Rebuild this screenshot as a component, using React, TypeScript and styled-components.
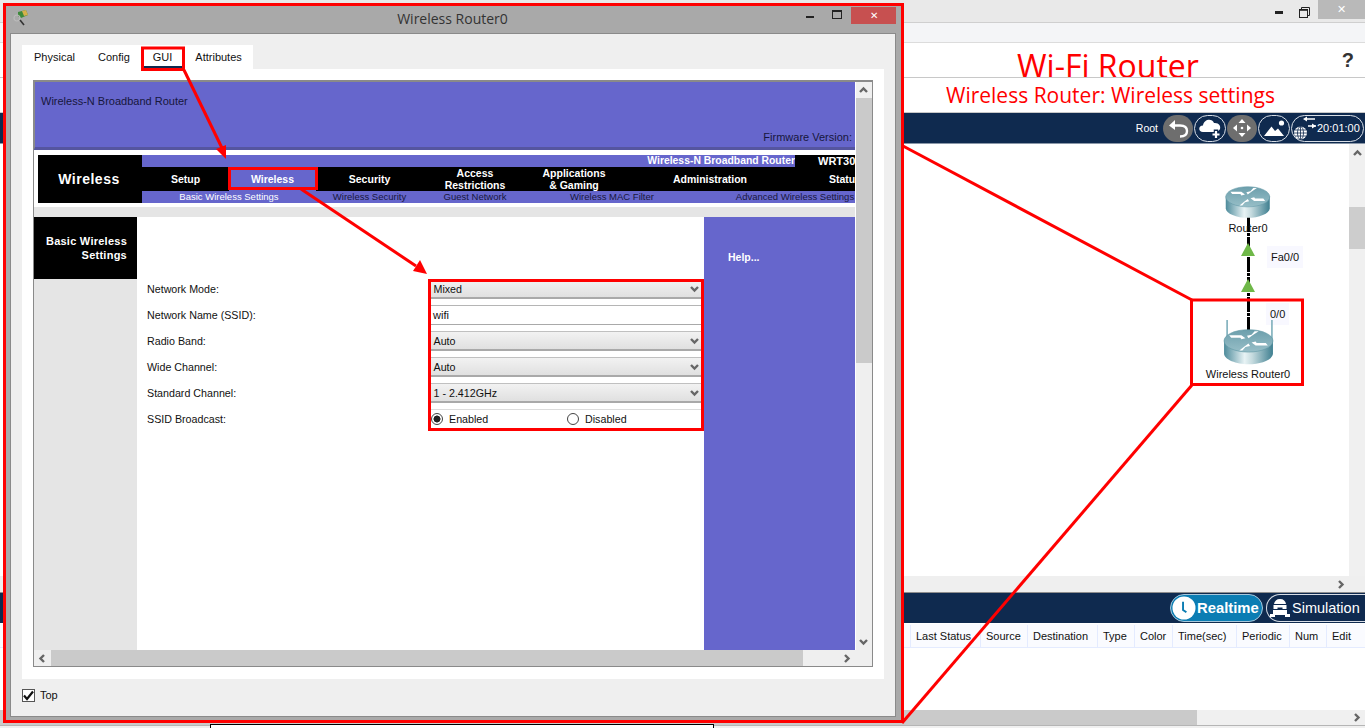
import styled, { createGlobalStyle } from "styled-components";

const GlobalStyle = createGlobalStyle`
  html, body {
    margin: 0;
    padding: 0;
    overflow: hidden;
    background: #f0f0f0;
    font-family: "Liberation Sans", Arial, sans-serif;
  }
`;

const NAVY = "#0f2a4f";
const PURPLE = "#6666cc";
const RED = "#ff0000";

const tableColumns = [
  ["Last Status", 70],
  ["Source", 47],
  ["Destination", 70],
  ["Type", 37],
  ["Color", 38],
  ["Time(sec)", 64],
  ["Periodic", 53],
  ["Num", 37],
  ["Edit", 38],
] as const;

const mainTabs = [
  { label: "Setup", width: 87 },
  { label: "Wireless", width: 87, active: true },
  { label: "Security", width: 107 },
  { label: "Access\nRestrictions", width: 104 },
  { label: "Applications\n& Gaming", width: 94 },
  { label: "Administration", width: 178 },
  { label: "Status", width: 92 },
];

const subTabs = [
  { label: "Basic Wireless Settings", width: 174, active: true },
  { label: "Wireless Security", width: 107 },
  { label: "Guest Network", width: 104 },
  { label: "Wireless MAC Filter", width: 170 },
  { label: "Advanced Wireless Settings", width: 196 },
];

const Chevron = ({ dir, color = "#666" }: { dir: "up" | "down" | "left" | "right"; color?: string }) => {
  const points = {
    up: "2,7 5.5,3.5 9,7",
    down: "2,4 5.5,7.5 9,4",
    left: "7,2 3.5,5.5 7,9",
    right: "4,2 7.5,5.5 4,9",
  }[dir];
  return (
    <svg width="11" height="11" viewBox="0 0 11 11">
      <polyline points={points} fill="none" stroke={color} strokeWidth="2.4" />
    </svg>
  );
};

const RouterIcon = ({ wireless, width }: { wireless?: boolean; width: number }) => (
  <svg width={width} height={(width * 44) / 54} viewBox="0 0 54 44">
    <defs>
      <linearGradient id="routerSide" x1="0" x2="1" y1="0" y2="0">
        <stop offset="0" stopColor="#4d8b9b" />
        <stop offset="0.42" stopColor="#e8f3f5" />
        <stop offset="0.58" stopColor="#c4dade" />
        <stop offset="1" stopColor="#3f7f90" />
      </linearGradient>
      <linearGradient id="routerTop" x1="0" x2="0" y1="0" y2="1">
        <stop offset="0" stopColor="#6c9fac" />
        <stop offset="1" stopColor="#97bec7" />
      </linearGradient>
    </defs>
    {wireless && (
      <g stroke="#7fb0bc" strokeWidth="1.6" fill="none">
        <line x1="6" y1="0" x2="6" y2="20" />
        <line x1="50" y1="0" x2="50" y2="20" />
      </g>
    )}
    <path d="M3 20 V33 C3 39 15 43.5 27 43.5 C39 43.5 51 39 51 33 V20 Z" fill="url(#routerSide)" />
    <ellipse cx="27" cy="20.5" rx="24" ry="11" fill="url(#routerTop)" stroke="#5f97a5" strokeWidth="0.6" />
    <g fill="#fff">
      <path d="M8 15 L20 15 L24 18 L20 19 L19 17.5 L10 17.5 Z" />
      <path d="M46 25 L34 25 L30 22 L34 21 L35 22.5 L44 22.5 Z" />
      <path d="M37 11 L31 15 L27 18 L25.5 15.5 L30 14.5 L33 11 Z" />
      <path d="M18 30 L23 26 L27 23 L28.5 25.5 L24 26.5 L21 30 Z" />
    </g>
  </svg>
);

const App = () => {
  return (
    <>
      <GlobalStyle />
      <Page>
        <TopBar>
          <MinimizeGlyph />
          <RestoreGlyph>
            <svg width="11" height="11" viewBox="0 0 11 11">
              <rect x="0.5" y="2.5" width="8" height="8" fill="none" stroke="#222" />
              <path d="M2.5 2.5 V0.5 H10.5 V8.5 H8.5" fill="none" stroke="#222" />
              <line x1="0" y1="3" x2="9" y2="3" stroke="#222" strokeWidth="1.6" />
            </svg>
          </RestoreGlyph>
          <CloseBox>✕</CloseBox>
        </TopBar>
        <MenuBar />
        <TitleStrip>
          <BigTitle>Wi-Fi Router</BigTitle>
          <HelpMark>?</HelpMark>
        </TitleStrip>
        <SubtitleStrip>
          <SubTitle>Wireless Router: Wireless settings</SubTitle>
        </SubtitleStrip>
        <NavyToolbar>
          <RootLabel>Root</RootLabel>
          <ToolPill $filled $width={30}>
            <svg width="26" height="24" viewBox="0 0 26 24">
              <path d="M10 4 L4 9.5 L10 14 Z" fill="#fff" />
              <path d="M8 9.5 H15 C20 9.5 22 12 22 15 C22 18.5 19.5 20.5 15 20.5" fill="none" stroke="#fff" strokeWidth="2.4" />
            </svg>
          </ToolPill>
          <ToolPill $width={32}>
            <svg width="28" height="24" viewBox="0 0 28 24">
              <path d="M7 16 C2 16 2 9.5 7 9.5 C8 3 16 2 18 7 C23 6.5 25 10 24 13 C23 15 21 16 19 16 Z" fill="#fff" />
              <path d="M20 13.5 V23 M15.5 18.5 H25" stroke={NAVY} strokeWidth="4.5" />
              <path d="M20 15 V22 M16.5 18.5 H23.5" stroke="#fff" strokeWidth="2.2" />
            </svg>
          </ToolPill>
          <ToolPill $filled $width={30}>
            <svg width="24" height="24" viewBox="0 0 24 24" fill="#fff">
              <path d="M12 3 L15.5 7 H8.5 Z" />
              <path d="M12 21 L8.5 17 H15.5 Z" />
              <path d="M3 12 L7 8.5 V15.5 Z" />
              <path d="M21 12 L17 15.5 V8.5 Z" />
              <circle cx="12" cy="12" r="1.3" />
            </svg>
          </ToolPill>
          <ToolPill $width={32}>
            <svg width="28" height="22" viewBox="0 0 28 22" fill="#fff">
              <path d="M4 19 L11.5 9.5 L15 14 L18 11.5 L24 19 Z" />
              <circle cx="21.5" cy="6" r="2.6" />
            </svg>
          </ToolPill>
          <ClockPill>
            <svg width="24" height="26" viewBox="0 0 24 26">
              <circle cx="7.5" cy="18" r="6.5" fill="#fff" />
              <g stroke={NAVY} strokeWidth="0.8" fill="none">
                <ellipse cx="7.5" cy="18" rx="3" ry="6.5" />
                <path d="M1 18 H14 M2 15 H13 M2 21 H13 M7.5 11.5 V24.5" />
              </g>
              <path d="M12 4 H22 M15 11 H23" stroke="#fff" strokeWidth="1.6" />
              <path d="M14 1.5 L10 4 L14 6.5 Z M19 8.5 L23 11 L19 13.5 Z" fill="#fff" />
            </svg>
            <ClockText>20:01:00</ClockText>
          </ClockPill>
        </NavyToolbar>
        <CanvasRow>
          <Canvas>
            <WireLine />
            <LinkArrow $top={99} />
            <LinkArrow $top={135} />
            <RouterSpot $left={1223} $top={34}>
              <RouterIcon width={49.5} />
            </RouterSpot>
            <DeviceName $center={1248} $top={78}>Router0</DeviceName>
            <PortLabel $left={1267} $top={102}>Fa0/0</PortLabel>
            <PortLabel $left={1266} $top={159}>0/0</PortLabel>
            <RouterSpot $left={1221} $top={176}>
              <RouterIcon wireless width={55} />
            </RouterSpot>
            <DeviceName $center={1248} $top={224}>Wireless Router0</DeviceName>
          </Canvas>
          <CanvasScroll>
            <Chevron dir="up" />
            <CanvasThumb />
          </CanvasScroll>
        </CanvasRow>
        <CanvasHScroll>
          <Chevron dir="right" />
        </CanvasHScroll>
        <ModeBar>
          <RealtimePill>
            <svg width="24" height="24" viewBox="0 0 25 25">
              <circle cx="12.5" cy="12.5" r="12" fill="#fff" />
              <path d="M11.5 6 V14.5 L15 17" fill="none" stroke="#0b7db3" strokeWidth="2" />
            </svg>
            Realtime
          </RealtimePill>
          <SimulationPill>
            <svg width="24" height="24" viewBox="0 0 24 24" fill="#fff">
              <path d="M12 3 C15.5 3 17.5 5 18 8 H6 C6.5 5 8.5 3 12 3 Z" />
              <path d="M5.5 9 H18.5 V13 H14.5 V11.5 H9.5 V13 H5.5 Z" />
              <path d="M5 14 H19 V18 H22 V21 H17 V19 H7 V21 H2 V18 H5 Z" />
            </svg>
            Simulation
          </SimulationPill>
        </ModeBar>
        <TableHead>
          {tableColumns.map(([label, width]) => (
            <TableCol key={label} $width={width}>{label}</TableCol>
          ))}
        </TableHead>
        <TableBody />
        <TableScroll>
          <TableThumb />
          <Chevron dir="right" />
        </TableScroll>
        <BottomStrip />
        <StatusBox />

        <Dialog>
          <DialogTitleBar>
            <DialogIcon>
              <svg width="16" height="17" viewBox="0 0 16 17">
                <path d="M5 3 L13 1 L15 6 L8 9 L5 7 Z" fill="#3d8a3a" />
                <path d="M9 2 L13 1 L15 6 L11 7 Z" fill="#d6b04c" />
                <circle cx="4" cy="9" r="3" fill="none" stroke="#bbb" strokeWidth="1.2" />
                <path d="M7 11 L11 16" stroke="#333" strokeWidth="1.6" />
              </svg>
            </DialogIcon>
            <DialogTitle>Wireless Router0</DialogTitle>
            <DialogMin />
            <DialogMax />
            <DialogClose>✕</DialogClose>
          </DialogTitleBar>
          <DialogBody>
            <TabBar>
              <DialogTab>Physical</DialogTab>
              <DialogTab>Config</DialogTab>
              <DialogTab $active>GUI</DialogTab>
              <DialogTab>Attributes</DialogTab>
            </TabBar>
            <TabPanel>
              <BrowserFrame>
                <BrowserPage>
                  <RouterHeader>
                    <HeaderName>Wireless-N Broadband Router</HeaderName>
                    <Firmware>Firmware Version:</Firmware>
                  </RouterHeader>
                  <NavBlock>
                    <NavSection>Wireless</NavSection>
                    <NavRows>
                      <NavTop>
                        <NavTopName>Wireless-N Broadband Router</NavTopName>
                        <NavModel>WRT300N</NavModel>
                      </NavTop>
                      <NavMain>
                        {mainTabs.map((t) => (
                          <NavTab key={t.label} $width={t.width} $active={t.active}>{t.label}</NavTab>
                        ))}
                      </NavMain>
                      <NavSub>
                        {subTabs.map((t) => (
                          <NavSubItem key={t.label} $width={t.width} $active={t.active}>{t.label}</NavSubItem>
                        ))}
                      </NavSub>
                    </NavRows>
                  </NavBlock>
                  <GreyRule />
                  <MainArea>
                    <SideColumn>
                      <SideHeading>Basic Wireless<br />Settings</SideHeading>
                    </SideColumn>
                    <FormColumn>
                      <FormRow>
                        <FieldLabel>Network Mode:</FieldLabel>
                        <SelectBox>Mixed<Chevron dir="down" /></SelectBox>
                      </FormRow>
                      <FormRow>
                        <FieldLabel>Network Name (SSID):</FieldLabel>
                        <TextBox>wifi</TextBox>
                      </FormRow>
                      <FormRow>
                        <FieldLabel>Radio Band:</FieldLabel>
                        <SelectBox>Auto<Chevron dir="down" /></SelectBox>
                      </FormRow>
                      <FormRow>
                        <FieldLabel>Wide Channel:</FieldLabel>
                        <SelectBox>Auto<Chevron dir="down" /></SelectBox>
                      </FormRow>
                      <FormRow>
                        <FieldLabel>Standard Channel:</FieldLabel>
                        <SelectBox>1 - 2.412GHz<Chevron dir="down" /></SelectBox>
                      </FormRow>
                      <FormRow>
                        <FieldLabel>SSID Broadcast:</FieldLabel>
                        <RadioRow>
                          <RadioOption><RadioDot $on />Enabled</RadioOption>
                          <RadioOption><RadioDot />Disabled</RadioOption>
                        </RadioRow>
                      </FormRow>
                    </FormColumn>
                    <HelpColumn>Help...</HelpColumn>
                  </MainArea>
                </BrowserPage>
                <VScroll>
                  <Chevron dir="up" />
                  <VThumb />
                  <Chevron dir="down" />
                </VScroll>
                <HScroll>
                  <Chevron dir="left" />
                  <HThumb />
                  <Chevron dir="right" />
                </HScroll>
              </BrowserFrame>
            </TabPanel>
            <TopRow>
              <CheckBox>
                <svg width="11" height="11" viewBox="0 0 11 11">
                  <path d="M1 5.5 L4 9 L10 1.5" fill="none" stroke="#111" strokeWidth="2.2" />
                </svg>
              </CheckBox>
              Top
            </TopRow>
          </DialogBody>
        </Dialog>

        <Annotations width="1365" height="728" viewBox="0 0 1365 728">
          <g fill="none" stroke={RED} strokeWidth="3">
            <rect x="142.5" y="48" width="41" height="21.5" />
            <rect x="229.5" y="168.5" width="87" height="20" />
            <rect x="429.5" y="280.5" width="273" height="149" />
            <rect x="1191.5" y="300" width="111" height="84.5" />
            <line x1="184" y1="70" x2="222" y2="148" />
            <line x1="301" y1="189" x2="416" y2="266" />
            <line x1="903" y1="146" x2="1192" y2="300" />
            <line x1="1192" y1="385" x2="902" y2="723" />
          </g>
          <path d="M226 159 L216 149 L226 145 Z" fill={RED} />
          <path d="M427 274 L413 271 L420 260 Z" fill={RED} />
        </Annotations>
      </Page>
    </>
  );
};

export default App;

const Page = styled.div`
  position: relative;
  width: 1365px;
  height: 728px;
  overflow: hidden;
  display: flex;
  flex-direction: column;
  background: #f0f0f0;
`;

const TopBar = styled.div`
  height: 22px;
  flex: none;
  display: flex;
  align-items: flex-start;
  justify-content: flex-end;
  background: #e9e9e9;
  border-bottom: 1px solid #cfcfcf;
`;

const MinimizeGlyph = styled.div`
  width: 8px;
  height: 3px;
  margin: 11px 16px 0 0;
  background: #222;
`;

const RestoreGlyph = styled.div`
  height: 11px;
  margin: 4px 8px 0 0;
`;

const CloseBox = styled.div`
  width: 47px;
  height: 19px;
  background: #b9b9b9;
  color: #fff;
  font-size: 11px;
  line-height: 19px;
  text-align: center;
`;

const MenuBar = styled.div`
  height: 19px;
  flex: none;
  background: #f4f5f7;
  border-bottom: 1px solid #dcdcdc;
`;

const TitleStrip = styled.div`
  height: 34px;
  flex: none;
  display: flex;
  justify-content: space-between;
  padding: 0 11px 0 1017px;
  overflow: hidden;
  background: #fff;
  border-bottom: 1px solid #c8c8c8;
`;

const BigTitle = styled.div`
  color: ${RED};
  font-family: "Open Sans", sans-serif;
  font-size: 32px;
  line-height: 46px;
  white-space: nowrap;
`;

const HelpMark = styled.div`
  color: #333;
  font-size: 20px;
  font-weight: 700;
  line-height: 35px;
`;

const SubtitleStrip = styled.div`
  height: 34px;
  flex: none;
  padding-left: 946px;
  background: #fff;
  border-bottom: 1px solid #c8c8c8;
`;

const SubTitle = styled.div`
  color: ${RED};
  font-family: "Open Sans", sans-serif;
  font-size: 21px;
  line-height: 35px;
  white-space: nowrap;
`;

const NavyToolbar = styled.div`
  height: 30px;
  flex: none;
  display: flex;
  align-items: center;
  justify-content: flex-end;
  gap: 1px;
  padding-right: 1px;
  background: ${NAVY};
  border-bottom: 1px solid #8a97a8;
`;

const RootLabel = styled.span`
  margin-right: 4px;
  color: #fff;
  font-size: 10.5px;
`;

const ToolPill = styled.div<{ $filled?: boolean; $width: number }>`
  width: ${(p) => p.$width}px;
  height: 27px;
  flex: none;
  display: flex;
  align-items: center;
  justify-content: center;
  box-sizing: border-box;
  border-radius: 14px;
  background: ${(p) => (p.$filled ? "#6e6e6e" : "transparent")};
  border: ${(p) => (p.$filled ? "none" : "1px solid #d8dee6")};
`;

const ClockPill = styled.div`
  width: 73px;
  height: 27px;
  flex: none;
  display: flex;
  align-items: center;
  box-sizing: border-box;
  padding-left: 1px;
  border-radius: 14px;
  border: 1px solid #d8dee6;
`;

const ClockText = styled.span`
  color: #fff;
  font-size: 11px;
  white-space: nowrap;
`;

const CanvasRow = styled.div`
  height: 432px;
  flex: none;
  display: flex;
`;

const Canvas = styled.div`
  position: relative;
  flex: 1;
  background: #fff;
`;

const WireLine = styled.div`
  position: absolute;
  left: 1247px;
  top: 73px;
  width: 3px;
  height: 115px;
  background: repeating-linear-gradient(to bottom, #000 0 15px, #fff 15px 16px, #000 16px 19px, #fff 19px 20px);
`;

const LinkArrow = styled.div<{ $top: number }>`
  position: absolute;
  left: 1241px;
  top: ${(p) => p.$top}px;
  width: 0;
  height: 0;
  border-left: 7px solid transparent;
  border-right: 7px solid transparent;
  border-bottom: 13px solid #6fb848;
`;

const RouterSpot = styled.div<{ $left: number; $top: number }>`
  position: absolute;
  left: ${(p) => p.$left}px;
  top: ${(p) => p.$top}px;
  line-height: 0;
`;

const DeviceName = styled.div<{ $center: number; $top: number }>`
  position: absolute;
  left: ${(p) => p.$center}px;
  top: ${(p) => p.$top}px;
  transform: translateX(-50%);
  color: #111;
  font-size: 11px;
  white-space: nowrap;
`;

const PortLabel = styled.div<{ $left: number; $top: number }>`
  position: absolute;
  left: ${(p) => p.$left}px;
  top: ${(p) => p.$top}px;
  padding: 5px 4px;
  background: #f8f8ff;
  color: #111;
  font-size: 11px;
  line-height: 12px;
`;

const CanvasScroll = styled.div`
  width: 16px;
  flex: none;
  display: flex;
  flex-direction: column;
  align-items: center;
  padding-top: 4px;
  box-sizing: border-box;
  background: #f0f0f0;
`;

const CanvasThumb = styled.div`
  width: 16px;
  height: 42px;
  margin-top: 48px;
  background: #cdcdcd;
`;

const CanvasHScroll = styled.div`
  height: 16px;
  flex: none;
  display: flex;
  align-items: center;
  justify-content: flex-end;
  padding-right: 19px;
  background: #efefef;
  border-bottom: 1px solid #8e8e8e;
`;

const ModeBar = styled.div`
  height: 30px;
  flex: none;
  display: flex;
  align-items: center;
  justify-content: flex-end;
  gap: 3px;
  background: ${NAVY};
`;

const RealtimePill = styled.div`
  width: 93px;
  height: 28px;
  display: flex;
  align-items: center;
  gap: 1px;
  box-sizing: border-box;
  padding-left: 1px;
  border: 1px solid #a8c8dc;
  border-radius: 14px;
  background: #0b7db3;
  color: #fff;
  font-size: 14.8px;
  font-weight: 700;
`;

const SimulationPill = styled.div`
  width: 99px;
  height: 28px;
  flex: none;
  display: flex;
  align-items: center;
  box-sizing: border-box;
  padding-left: 1px;
  border: 1px solid #d8dee6;
  border-radius: 14px 0 0 14px;
  border-right: none;
  color: #fff;
  font-size: 14.5px;
`;

const TableHead = styled.div`
  height: 22px;
  flex: none;
  display: flex;
  justify-content: flex-end;
  padding: 1px 1px 0 0;
  background: #fafbff;
  border-bottom: 1px solid #e4ebff;
  border-top: 1px solid #fff;
`;

const TableCol = styled.div<{ $width: number }>`
  width: ${(p) => p.$width}px;
  box-sizing: border-box;
  padding-left: 5px;
  border-left: 1px solid #e4ebff;
  color: #111;
  font-size: 11px;
  line-height: 22px;
  white-space: nowrap;
`;

const TableBody = styled.div`
  height: 62px;
  flex: none;
  background: #fff;
`;

const TableScroll = styled.div`
  height: 15px;
  flex: none;
  display: flex;
  align-items: center;
  justify-content: space-between;
  padding-right: 3px;
  background: #f0f0f0;
  border-bottom: 1px solid #b5b5b5;
`;

const TableThumb = styled.div`
  width: 1197px;
  height: 15px;
  background: #cacaca;
`;

const BottomStrip = styled.div`
  flex: 1;
  background: #f0f0f0;
`;

const StatusBox = styled.div`
  position: absolute;
  left: 210px;
  top: 724px;
  width: 504px;
  height: 10px;
  box-sizing: border-box;
  border: 1px solid #000;
  background: #fff;
`;

const Dialog = styled.div`
  position: absolute;
  left: 3px;
  top: 3px;
  width: 901px;
  height: 720px;
  box-sizing: border-box;
  display: flex;
  flex-direction: column;
  padding: 0 5px 3px 4px;
  border: 3px solid ${RED};
  background: #a9a9a9;
`;

const DialogTitleBar = styled.div`
  position: relative;
  height: 27px;
  flex: none;
  display: flex;
  align-items: flex-start;
  justify-content: flex-end;
`;

const DialogIcon = styled.div`
  position: absolute;
  left: 3px;
  top: 3px;
  line-height: 0;
`;

const DialogTitle = styled.div`
  position: absolute;
  left: 0;
  right: 0;
  top: 3px;
  padding-right: 1px;
  text-align: center;
  color: #333;
  font-family: "Open Sans", sans-serif;
  font-size: 14px;
  line-height: 20px;
`;

const DialogMin = styled.div`
  width: 8px;
  height: 2px;
  margin: 10px 18px 0 0;
  background: #222;
`;

const DialogMax = styled.div`
  width: 8px;
  height: 6px;
  margin: 4px 9px 0 0;
  border: 1px solid #222;
  border-top-width: 2px;
`;

const DialogClose = styled.div`
  width: 45px;
  height: 17px;
  margin-top: 1px;
  background: #c75050;
  color: #fff;
  font-size: 10px;
  line-height: 17px;
  text-align: center;
`;

const DialogBody = styled.div`
  flex: 1;
  display: flex;
  flex-direction: column;
  min-height: 0;
  padding: 11px 11px 0;
  border: 1px solid #8a8a8a;
  background: #efefef;
`;

const TabBar = styled.div`
  height: 24px;
  flex: none;
  align-self: flex-start;
  display: flex;
  padding-left: 0.5px;
  background: #fff;
`;

const DialogTab = styled.div<{ $active?: boolean }>`
  box-sizing: border-box;
  padding: 0 11.5px;
  color: #111;
  font-size: 11px;
  line-height: 24px;
  border-bottom: ${(p) => (p.$active ? `3px solid ${NAVY}` : "none")};
`;

const TabPanel = styled.div`
  height: 610px;
  flex: none;
  box-sizing: border-box;
  padding: 11px 11px 12px;
  background: #fff;
`;

const BrowserFrame = styled.div`
  height: 100%;
  box-sizing: border-box;
  display: grid;
  grid-template-columns: 1fr 17px;
  grid-template-rows: 1fr 16px;
  border: 1px solid #8a8a8a;
  border-top-width: 2px;
`;

const BrowserPage = styled.div`
  min-width: 0;
  min-height: 0;
  overflow: hidden;
  display: flex;
  flex-direction: column;
  background: #fff;
`;

const RouterHeader = styled.div`
  height: 65px;
  flex: none;
  position: relative;
  background: ${PURPLE};
  border-bottom: 3px solid #55559f;
  border-left: 1px solid #8a8a8a;
  color: #16163c;
  font-size: 11px;
`;

const HeaderName = styled.div`
  position: absolute;
  left: 6px;
  top: 13px;
`;

const Firmware = styled.div`
  position: absolute;
  right: 3px;
  bottom: 4px;
`;

const NavBlock = styled.div`
  height: 48px;
  flex: none;
  display: flex;
  margin: 5px 0 0 4px;
  background: #000;
`;

const NavSection = styled.div`
  width: 104px;
  flex: none;
  box-sizing: border-box;
  padding-right: 2px;
  color: #fff;
  font-size: 14px;
  font-weight: 700;
  letter-spacing: 0.5px;
  line-height: 49px;
  text-align: center;
`;

const NavRows = styled.div`
  flex: 1;
  min-width: 0;
  overflow: hidden;
  display: flex;
  flex-direction: column;
`;

const NavTop = styled.div`
  height: 12px;
  flex: none;
  display: flex;
  justify-content: flex-end;
  background: ${PURPLE};
`;

const NavTopName = styled.div`
  color: #fff;
  font-size: 10.4px;
  font-weight: 700;
  line-height: 12px;
  white-space: nowrap;
`;

const NavModel = styled.div`
  width: 60px;
  flex: none;
  box-sizing: border-box;
  padding-left: 23px;
  overflow: hidden;
  background: #000;
  color: #fff;
  font-size: 11px;
  font-weight: 700;
  line-height: 12px;
  white-space: nowrap;
`;

const NavMain = styled.div`
  height: 24px;
  flex: none;
  display: flex;
`;

const NavTab = styled.div<{ $width: number; $active?: boolean }>`
  width: ${(p) => p.$width}px;
  flex: none;
  display: flex;
  align-items: center;
  justify-content: center;
  background: ${(p) => (p.$active ? PURPLE : "#000")};
  color: #fff;
  font-size: 10.5px;
  font-weight: 700;
  line-height: 12px;
  text-align: center;
  white-space: pre-line;
`;

const NavSub = styled.div`
  height: 12px;
  flex: none;
  display: flex;
  background: ${PURPLE};
`;

const NavSubItem = styled.div<{ $width: number; $active?: boolean }>`
  width: ${(p) => p.$width}px;
  flex: none;
  color: ${(p) => (p.$active ? "#fff" : "#16163c")};
  font-size: 9.5px;
  line-height: 12px;
  text-align: center;
  white-space: nowrap;
`;

const GreyRule = styled.div`
  height: 10px;
  flex: none;
  margin-top: 4px;
  background: #e5e5e5;
`;

const MainArea = styled.div`
  flex: 1;
  display: flex;
  min-height: 0;
`;

const SideColumn = styled.div`
  width: 103px;
  flex: none;
  background: #e5e5e5;
`;

const SideHeading = styled.div`
  height: 62px;
  box-sizing: border-box;
  padding: 17px 10px 0 0;
  background: #000;
  color: #fff;
  font-size: 11px;
  font-weight: 700;
  letter-spacing: 0.25px;
  line-height: 14px;
  text-align: right;
`;

const FormColumn = styled.div`
  width: 567px;
  flex: none;
  box-sizing: border-box;
  display: flex;
  flex-direction: column;
  gap: 6px;
  padding: 62px 3px 0 10px;
  background: #fff;
`;

const FormRow = styled.div`
  height: 20px;
  display: flex;
  align-items: center;
`;

const FieldLabel = styled.div`
  width: 284px;
  flex: none;
  color: #111;
  font-size: 10.7px;
`;

const SelectBox = styled.div`
  flex: 1;
  height: 20px;
  display: flex;
  align-items: center;
  justify-content: space-between;
  box-sizing: border-box;
  padding: 0 1px 0 2.5px;
  border-bottom: 2px solid #a9a9a9;
  border-top: 1px solid #c0c0c0;
  background: linear-gradient(#f2f2f2, #e0e0e0);
  color: #111;
  font-size: 10.7px;
`;

const TextBox = styled.div`
  flex: 1;
  height: 20px;
  box-sizing: border-box;
  padding-left: 2px;
  border-top: 1px solid #b5b5b5;
  border-bottom: 1px solid #a9a9a9;
  background: #fff;
  color: #111;
  font-size: 11px;
  line-height: 18px;
`;

const RadioRow = styled.div`
  flex: 1;
  height: 20px;
  display: flex;
  align-items: center;
  padding-bottom: 2px;
  border-top: 1px solid #dcdcdc;
  box-sizing: border-box;
`;

const RadioOption = styled.div`
  width: 136px;
  display: flex;
  align-items: center;
  gap: 6px;
  color: #111;
  font-size: 10.7px;
`;

const RadioDot = styled.span<{ $on?: boolean }>`
  width: 12px;
  height: 12px;
  box-sizing: border-box;
  border: 1px solid #444;
  border-radius: 50%;
  background: ${(p) => (p.$on ? "radial-gradient(circle, #222 0 3.2px, #fff 3.8px)" : "#fff")};
`;

const HelpColumn = styled.div`
  flex: 1;
  box-sizing: border-box;
  padding: 34px 0 0 24px;
  background: ${PURPLE};
  color: #fff;
  font-size: 10.5px;
  font-weight: 700;
`;

const VScroll = styled.div`
  min-height: 0;
  display: flex;
  flex-direction: column;
  align-items: center;
  padding: 3px 0;
  box-sizing: border-box;
  background: linear-gradient(to right, #fff 1px, #efefef 1px);
`;

const VThumb = styled.div`
  width: 16px;
  height: 265px;
  margin: 2px 0 auto 1px;
  background: #cacaca;
`;

const HScroll = styled.div`
  grid-column: 1 / -1;
  display: flex;
  align-items: center;
  padding: 0 20px 0 3px;
  background: #efefef;
`;

const HThumb = styled.div`
  width: 752px;
  height: 100%;
  margin: 0 auto 0 3px;
  background: #cacaca;
`;

const TopRow = styled.div`
  flex: 1;
  display: flex;
  align-items: center;
  gap: 5px;
  padding-bottom: 5px;
  color: #111;
  font-size: 11px;
`;

const CheckBox = styled.div`
  width: 13px;
  height: 13px;
  box-sizing: border-box;
  display: flex;
  align-items: center;
  justify-content: center;
  border: 1px solid #555;
  background: #fff;
`;

const Annotations = styled.svg`
  position: absolute;
  left: 0;
  top: 0;
  pointer-events: none;
`;
